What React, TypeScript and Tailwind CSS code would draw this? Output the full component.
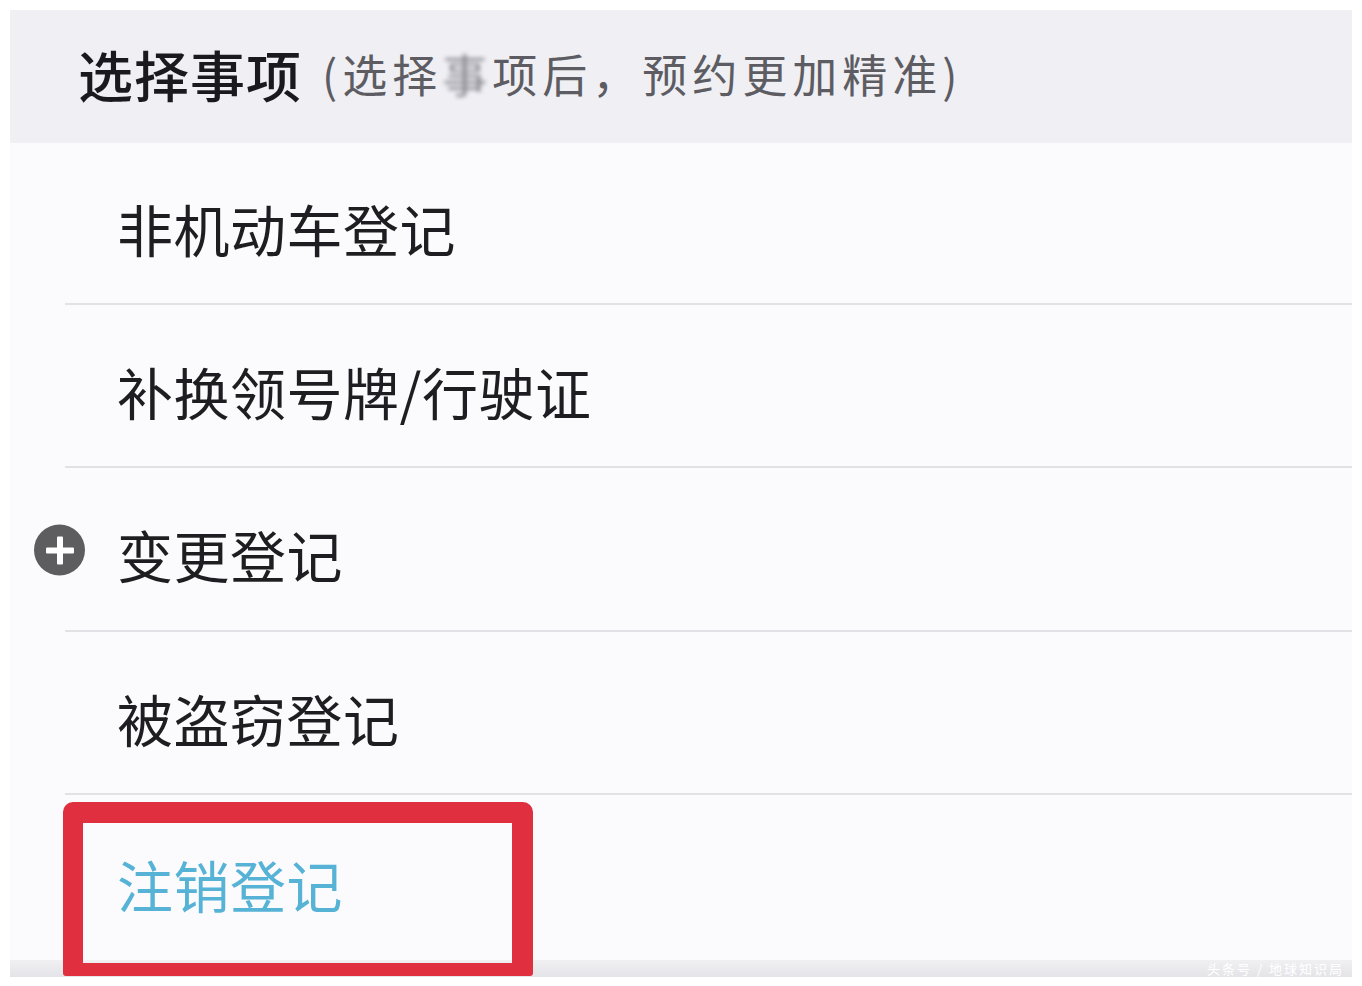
import React from "react";

const font = { fontFamily: '"Noto Sans CJK SC", "Noto Sans", sans-serif' };

function Row({ label, h, icon, divider = true }: { label: string; h: string; icon?: boolean; divider?: boolean }) {
  return (
    <div className="flex flex-col">
      <div className={`relative flex items-center pl-[107px] pt-[10px] ${h}`}>
        {icon && (
          <div className="absolute left-[24px] top-1/2 -translate-y-1/2 mt-[1px] w-[51px] h-[51px] rounded-full bg-[#5d5d5f] flex items-center justify-center">
            <div className="relative w-[28px] h-[28px]">
              <div className="absolute left-0 top-[11px] w-[28px] h-[6px] bg-white rounded-[1px]" />
              <div className="absolute top-0 left-[11px] w-[6px] h-[28px] bg-white rounded-[1px]" />
            </div>
          </div>
        )}
        <span className="text-[56px] leading-none text-[#1e1e22] tracking-[0.5px]">{label}</span>
      </div>
      {divider && <div className="ml-[55px] h-[2px] bg-[#e2e2e6]" />}
    </div>
  );
}

export default function App() {
  return (
    <div className="min-h-[986px] bg-white pt-[10px] pl-[10px]" style={font}>
      <div className="relative w-[1342px]">
        <div className="h-[133px] bg-[#efeff4] flex items-center pl-[68px] pb-[6px]">
          <span className="text-[55px] leading-none font-medium text-[#1a1a1e] tracking-[1px]">选择事项</span>
          <span className="ml-[20px] text-[45px] leading-none text-[#5c5c62] tracking-[5px]">
            (选择<span className="blur-[2px] text-[#8a8a90]">事</span>项后，预约更加精准)
          </span>
        </div>
        <div className="bg-[#fbfbfe]">
          <Row label="非机动车登记" h="h-[160px]" />
          <Row label="补换领号牌/行驶证" h="h-[161px]" />
          <Row label="变更登记" h="h-[162px]" icon />
          <Row label="被盗窃登记" h="h-[161px]" />
          <div className="h-[165px] flex items-center pl-[107px] pt-[12px]">
            <span className="text-[56px] leading-none text-[#57b3d6] tracking-[0.5px]">注销登记</span>
          </div>
        </div>
        <div className="relative h-[17px] bg-gradient-to-b from-[#f0f0f3] to-[#e4e4e8]">
          <div className="absolute right-[8px] top-0 h-[17px] flex items-center text-[13px] leading-none text-white tracking-[2px]">头条号 / 地球知识局</div>
        </div>
        <div className="absolute left-[53px] top-[792px] w-[470px] h-[174px] rounded-t-[10px] rounded-b-[3px] border-[#e0303f] border-t-[21px] border-l-[20px] border-r-[21px] border-b-[13px]" />
      </div>
    </div>
  );
}
